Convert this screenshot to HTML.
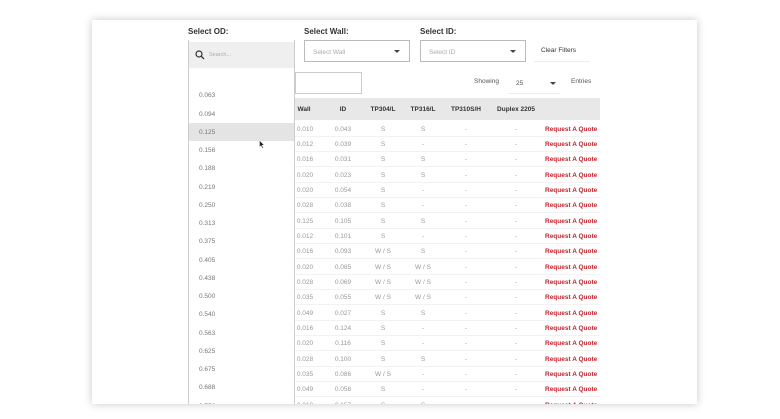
<!DOCTYPE html>
<html><head><meta charset="utf-8"><style>
*{margin:0;padding:0;box-sizing:border-box}
body{width:780px;height:419px;background:#fff;position:relative;overflow:hidden;font-family:"Liberation Sans",sans-serif;color:#888}
.card{position:absolute;left:92px;top:20px;width:605px;height:384px;background:#fff;box-shadow:0 0 8px rgba(0,0,0,.22);overflow:hidden}
.a{position:absolute;white-space:nowrap}
.lbl{font-size:8px;font-weight:bold;color:#333}
.sel{position:absolute;border:1px solid #bbb;background:#fff;font-size:6.5px;color:#aaa;padding:8px 0 0 8px}
.sel:after{content:"";position:absolute;right:9px;top:9px;border-left:3px solid transparent;border-right:3px solid transparent;border-top:3px solid #444}
.hdr{position:absolute;left:203px;top:78px;width:305px;height:22px;background:#e8e8e8}
.th{position:absolute;top:86px;font-size:6.5px;font-weight:bold;color:#333;transform:translateX(-50%)}
.r{position:absolute;left:203px;width:305px;height:15px;border-bottom:1px solid #f2f2f2;font-size:6.5px;color:#999}
.r span{position:absolute;top:4px;transform:translateX(-50%)}
.r span.q{color:#c4232c;font-weight:bold;transform:none;left:250px}
.dd{position:absolute;left:96px;top:20px;width:107px;height:370px;background:#fff;border-left:1px solid #ccc;border-right:1px solid #ccc}
.it{position:absolute;left:10px;font-size:6.5px;color:#777}
</style></head><body>
<div class="card">
<div class="a lbl" style="left:96px;top:7px">Select OD:</div>
<div class="a lbl" style="left:212px;top:7px">Select Wall:</div>
<div class="a lbl" style="left:328px;top:7px">Select ID:</div>
<div class="sel" style="left:212px;top:20px;width:106px;height:22px">Select Wall</div>
<div class="sel" style="left:328px;top:20px;width:106px;height:22px">Select ID</div>
<div class="a" style="left:442px;top:22px;width:56px;height:20px;border-bottom:1px solid #eee;font-size:6.5px;color:#333;padding:5px 0 0 7px">Clear Filters</div>
<div class="a" style="left:203px;top:52px;width:67px;height:22px;border:1px solid #ccc"></div>
<div class="a" style="left:382px;top:58px;font-size:6.5px;color:#555">Showing</div>
<div class="a" style="left:416px;top:52px;width:52px;height:22px;border-bottom:1px solid #eee;font-size:6.5px;color:#555;padding:8px 0 0 8px">25</div>
<div class="a" style="left:458px;top:62px;border-left:3px solid transparent;border-right:3px solid transparent;border-top:3px solid #444"></div>
<div class="a" style="left:479px;top:58px;font-size:6.5px;color:#555">Entries</div>
<div class="hdr"></div>
<div class="th" style="left:212px">Wall</div>
<div class="th" style="left:251px">ID</div>
<div class="th" style="left:291px">TP304/L</div>
<div class="th" style="left:331px">TP316/L</div>
<div class="th" style="left:374px">TP310S/H</div>
<div class="th" style="left:424px">Duplex 2205</div>

<div class="r" style="top:102px"><span style="left:10px">0.010</span><span style="left:48px">0.043</span><span style="left:88px">S</span><span style="left:128px">S</span><span style="left:171px">-</span><span style="left:221px">-</span><span class="q">Request A Quote</span></div>
<div class="r" style="top:117px"><span style="left:10px">0.012</span><span style="left:48px">0.039</span><span style="left:88px">S</span><span style="left:128px">-</span><span style="left:171px">-</span><span style="left:221px">-</span><span class="q">Request A Quote</span></div>
<div class="r" style="top:132px"><span style="left:10px">0.016</span><span style="left:48px">0.031</span><span style="left:88px">S</span><span style="left:128px">S</span><span style="left:171px">-</span><span style="left:221px">-</span><span class="q">Request A Quote</span></div>
<div class="r" style="top:148px"><span style="left:10px">0.020</span><span style="left:48px">0.023</span><span style="left:88px">S</span><span style="left:128px">S</span><span style="left:171px">-</span><span style="left:221px">-</span><span class="q">Request A Quote</span></div>
<div class="r" style="top:163px"><span style="left:10px">0.020</span><span style="left:48px">0.054</span><span style="left:88px">S</span><span style="left:128px">-</span><span style="left:171px">-</span><span style="left:221px">-</span><span class="q">Request A Quote</span></div>
<div class="r" style="top:178px"><span style="left:10px">0.028</span><span style="left:48px">0.038</span><span style="left:88px">S</span><span style="left:128px">-</span><span style="left:171px">-</span><span style="left:221px">-</span><span class="q">Request A Quote</span></div>
<div class="r" style="top:194px"><span style="left:10px">0.125</span><span style="left:48px">0.105</span><span style="left:88px">S</span><span style="left:128px">S</span><span style="left:171px">-</span><span style="left:221px">-</span><span class="q">Request A Quote</span></div>
<div class="r" style="top:209px"><span style="left:10px">0.012</span><span style="left:48px">0.101</span><span style="left:88px">S</span><span style="left:128px">-</span><span style="left:171px">-</span><span style="left:221px">-</span><span class="q">Request A Quote</span></div>
<div class="r" style="top:224px"><span style="left:10px">0.016</span><span style="left:48px">0.093</span><span style="left:88px">W / S</span><span style="left:128px">S</span><span style="left:171px">-</span><span style="left:221px">-</span><span class="q">Request A Quote</span></div>
<div class="r" style="top:240px"><span style="left:10px">0.020</span><span style="left:48px">0.085</span><span style="left:88px">W / S</span><span style="left:128px">W / S</span><span style="left:171px">-</span><span style="left:221px">-</span><span class="q">Request A Quote</span></div>
<div class="r" style="top:255px"><span style="left:10px">0.028</span><span style="left:48px">0.069</span><span style="left:88px">W / S</span><span style="left:128px">W / S</span><span style="left:171px">-</span><span style="left:221px">-</span><span class="q">Request A Quote</span></div>
<div class="r" style="top:270px"><span style="left:10px">0.035</span><span style="left:48px">0.055</span><span style="left:88px">W / S</span><span style="left:128px">W / S</span><span style="left:171px">-</span><span style="left:221px">-</span><span class="q">Request A Quote</span></div>
<div class="r" style="top:286px"><span style="left:10px">0.049</span><span style="left:48px">0.027</span><span style="left:88px">S</span><span style="left:128px">S</span><span style="left:171px">-</span><span style="left:221px">-</span><span class="q">Request A Quote</span></div>
<div class="r" style="top:301px"><span style="left:10px">0.016</span><span style="left:48px">0.124</span><span style="left:88px">S</span><span style="left:128px">-</span><span style="left:171px">-</span><span style="left:221px">-</span><span class="q">Request A Quote</span></div>
<div class="r" style="top:316px"><span style="left:10px">0.020</span><span style="left:48px">0.116</span><span style="left:88px">S</span><span style="left:128px">-</span><span style="left:171px">-</span><span style="left:221px">-</span><span class="q">Request A Quote</span></div>
<div class="r" style="top:332px"><span style="left:10px">0.028</span><span style="left:48px">0.100</span><span style="left:88px">S</span><span style="left:128px">S</span><span style="left:171px">-</span><span style="left:221px">-</span><span class="q">Request A Quote</span></div>
<div class="r" style="top:347px"><span style="left:10px">0.035</span><span style="left:48px">0.086</span><span style="left:88px">W / S</span><span style="left:128px">-</span><span style="left:171px">-</span><span style="left:221px">-</span><span class="q">Request A Quote</span></div>
<div class="r" style="top:362px"><span style="left:10px">0.049</span><span style="left:48px">0.058</span><span style="left:88px">S</span><span style="left:128px">-</span><span style="left:171px">-</span><span style="left:221px">-</span><span class="q">Request A Quote</span></div>
<div class="r" style="top:378px"><span style="left:10px">0.010</span><span style="left:48px">0.157</span><span style="left:88px">S</span><span style="left:128px">S</span><span style="left:171px">-</span><span style="left:221px">-</span><span class="q">Request A Quote</span></div>

<div class="dd">
<div class="a" style="left:0;top:2px;width:105px;height:26px;background:#efefef"></div>
<svg class="a" style="left:6px;top:10px" width="10" height="10" viewBox="0 0 10 10"><circle cx="4" cy="4" r="3" fill="none" stroke="#333" stroke-width="1.2"/><path d="M6.2 6.2L9 9" stroke="#333" stroke-width="1.3"/></svg>
<div class="a" style="left:20px;top:12px;font-size:5.5px;color:#aaa">Search...</div>
<div class="a" style="left:0;top:83px;width:105px;height:18px;background:#e4e4e4"></div>
<div class="it" style="top:52px">0.063</div>
<div class="it" style="top:71px">0.094</div>
<div class="it" style="top:89px">0.125</div>
<div class="it" style="top:107px">0.156</div>
<div class="it" style="top:125px">0.188</div>
<div class="it" style="top:144px">0.219</div>
<div class="it" style="top:162px">0.250</div>
<div class="it" style="top:180px">0.313</div>
<div class="it" style="top:198px">0.375</div>
<div class="it" style="top:217px">0.405</div>
<div class="it" style="top:235px">0.438</div>
<div class="it" style="top:253px">0.500</div>
<div class="it" style="top:271px">0.540</div>
<div class="it" style="top:290px">0.563</div>
<div class="it" style="top:308px">0.625</div>
<div class="it" style="top:326px">0.675</div>
<div class="it" style="top:344px">0.688</div>
<div class="it" style="top:363px">0.750</div>
<svg class="a" style="left:70px;top:100px" width="6" height="9" viewBox="0 0 6 9"><path d="M0.5 0.5L0.5 7L2 5.5L3.2 8.3L4.2 7.9L3 5.2L5.2 5.2Z" fill="#222" stroke="#fff" stroke-width=".4"/></svg>
</div>
</div>
</body></html>
